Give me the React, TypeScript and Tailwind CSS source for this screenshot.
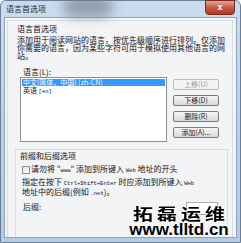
import React from 'react'

const cjk = "font-['Noto_Sans_CJK_SC','Noto_Sans',sans-serif]"
const mono = "font-['Liberation_Mono','DejaVu_Sans_Mono',monospace]"

const Btn = ({ label, disabled }: { label: string; disabled?: boolean }) => (
  <div
    className={`w-[46px] h-[11px] flex items-center justify-center rounded-[2px] border text-[7px] leading-none ${
      disabled
        ? 'border-[#b9bcbf] bg-[#f4f4f4] text-[#9a9a9a]'
        : 'border-[#777b80] bg-gradient-to-b from-[#f6f6f6] to-[#dadada] text-[#1b1b1b]'
    }`}
  >
    {label}
  </div>
)

export default function App() {
  return (
    <div className={`relative w-[241px] h-[243px] overflow-hidden ${cjk} text-[#111]`}>
      <div className="w-full h-full flex flex-col border border-[#6b7f96] rounded-t-[6px] bg-gradient-to-b from-[#c9dcef] via-[#bcd2ea] to-[#b3cbe6]">
        {/* Title bar */}
        <div className="relative h-[16px] flex items-start justify-between pl-[5px] pr-[5px]">
          <div className="absolute left-[62px] top-[-6px] w-[50px] h-[22px] rounded-full bg-[#6d7684] opacity-60 blur-[6px]"></div>
          <span className="relative text-[8px] leading-[16px] text-[#1d2b3b]">语言首选项</span>
          <div className="relative w-[30px] h-[15px] mt-[-1px] rounded-b-[4px] border border-[#7a2a20] bg-gradient-to-b from-[#e9a191] via-[#c85a44] to-[#b7321f] flex items-center justify-center">
            <span className="text-white text-[9px] font-bold leading-none font-['Liberation_Sans',sans-serif]">x</span>
          </div>
        </div>

        {/* Client area */}
        <div className="flex-1 mx-[3px] mb-[4px] border border-[#8ea4bb] bg-[#f3f4f6] flex flex-col">
          <div className="flex-1 mt-[2px] ml-[2px] mr-[3px] border border-[#d6dde3] border-b-0 flex flex-col">
            <div className="pl-[9px] pt-[4px]">
              <div className="text-[8px] leading-[8px]">语言首选项</div>
              <div className="mt-[3px] text-[8px] leading-[8px] whitespace-nowrap">
                <div>添加用于阅读网站的语言，按优先级顺序进行排列。仅添加</div>
                <div>你需要的语言，因为某些字符可用于模拟使用其他语言的网</div>
                <div>站。</div>
              </div>
              <div className="mt-[8px] ml-[6px] text-[8px] leading-[8px]">语言(L):</div>
            </div>

            <div className="flex mt-[1px] ml-[12px]">
              <div className="w-[147px] h-[65px] bg-white border border-[#8a9099] flex flex-col pt-[1px] px-[1px]">
                <div className="h-[7px] bg-[#3399ff] text-white text-[7px] leading-[7px] pl-[1px] whitespace-nowrap">
                  中文(简体，中国) [zh-CN]
                </div>
                <div className="mt-[1px] text-[7px] leading-[7px] pl-[1px] whitespace-nowrap">
                  英语 <span className={`${mono} text-[5.5px]`}>[en]</span>
                </div>
              </div>
              <div className="ml-[6px] mt-[2px] flex flex-col gap-[5px]">
                <Btn label="上移(U)" disabled />
                <Btn label="下移(D)" />
                <Btn label="删除(R)" />
                <Btn label="添加(A)..." />
              </div>
            </div>

            {/* Prefix & suffix */}
            <div className="flex-1 mt-[7px] ml-[7px] mr-[4px] border border-[#d6dde3] border-b-0 pl-[4px] pt-[2px] flex flex-col">
              <div className="text-[8px] leading-[8px]">前缀和后缀选项</div>
              <div className="mt-[5px] ml-[2px] flex items-center whitespace-nowrap">
                <div className="w-[8px] h-[8px] border border-[#8f8f8f] bg-gradient-to-br from-[#e4e4e4] to-[#ffffff]"></div>
                <span className="ml-[1px] text-[8px] leading-[8px]">
                  请勿将 "<span className={`${mono} text-[5.5px]`}>www</span>" 添加到所键入 <span className={`${mono} text-[5.5px]`}>Web</span> 地址的开头
                </span>
              </div>
              <div className="mt-[3px] ml-[2px] text-[8px] leading-[8px] whitespace-nowrap">
                <div>
                  指定在按下 <span className={`${mono} text-[5.5px]`}>Ctrl+Shift+Enter</span> 时应添加到所键入 <span className={`${mono} text-[5.5px]`}>Web</span>
                </div>
                <div>
                  地址中的后缀(例如 <span className={`${mono} text-[5.5px]`}>.net</span>)。
                </div>
              </div>
              <div className="mt-[4px] flex items-start justify-between pr-[9px]">
                <span className="mt-[1px] ml-[3px] text-[8px] leading-[8px]">后缀:</span>
                <div className="w-[32px] h-[13px] bg-white border border-[#abadb3]"></div>
              </div>
            </div>
          </div>
        </div>
      </div>

      {/* Watermark */}
      <div className="absolute left-[122px] top-[205px] w-[114px] flex flex-col items-center">
        <div className="h-[17px] text-[20px] leading-[17px] font-bold tracking-[4px] pl-[4px] text-black scale-y-[0.78] [text-shadow:0_0_2px_#fff,0_0_2px_#fff]">
          拓磊运维
        </div>
        <div className="font-['Liberation_Sans',Arial,sans-serif] font-bold text-[17px] leading-[16px] text-black [text-shadow:0_0_2px_#fff,0_0_2px_#fff]">
          www.tlltd.cn
        </div>
      </div>
    </div>
  )
}
